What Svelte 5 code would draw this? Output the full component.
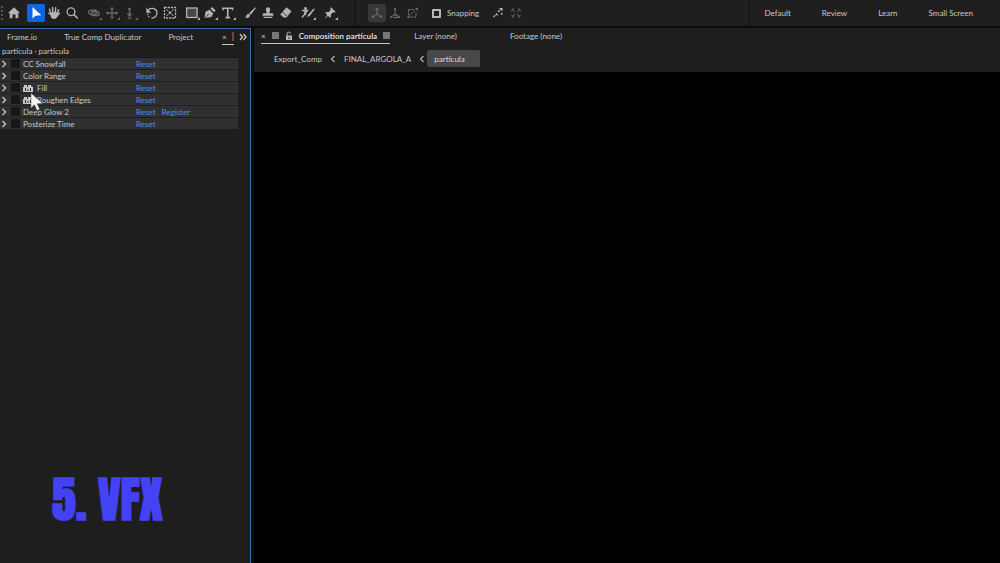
<script>
  const toolGroups = [
    ['home'],
    ['select', 'hand', 'zoom'],
    ['orbit', 'pan', 'dolly'],
    ['rotate', 'region'],
    ['rect', 'pen', 'type'],
    ['brush', 'stamp', 'eraser'],
    ['roto'],
    ['pin']
  ];
  const dim = ['orbit', 'pan', 'dolly'];
  const flyout = ['orbit', 'pan', 'dolly', 'rect', 'pen', 'type', 'roto', 'pin'];
  const effects = [
    { name: 'CC Snowfall' },
    { name: 'Color Range' },
    { name: 'Fill', badge: true },
    { name: 'Roughen Edges', badge: true },
    { name: 'Deep Glow 2', register: true },
    { name: 'Posterize Time' }
  ];
</script>

{#snippet toolIcon(name)}
  <svg viewBox="0 0 18 18" width="18" height="18" fill="none" stroke="currentColor" stroke-width="1.3" aria-hidden="true">
    {#if name === 'home'}
      <path d="M9 3.2 15 9h-1.700v5.200H10.500V10.500h-3v3.700H4.700V9H3z" fill="currentColor" stroke="none" />
    {:else if name === 'select'}
      <path d="M5.500 3v11.500l3-2.800 5.800-.5z" fill="currentColor" stroke="none" />
    {:else if name === 'hand'}
      <path d="M5.600 9 4.500 5.300M7.900 8.500 7.500 3.500M10.300 8.500l.4-4.800M12.300 9.200l1.300-3.500" stroke-width="1.500" stroke-linecap="round" />
      <path d="M5 8.200h7.900l-.2 1.300 1.500-1.100c.8-.4 1.300.2.9.8l-3 4.100-1.300 1.500H7.300c-1.200-1-1.400-2.200-1.800-3.600L3 9.500c-.3-.9.600-1.300 1.200-.700L5.300 10z" fill="currentColor" stroke="none" />
    {:else if name === 'zoom'}
      <circle cx="8" cy="7.700" r="3.900" /><path d="m10.900 10.600 3.900 3.900" stroke-width="1.500" />
    {:else if name === 'orbit'}
      <ellipse cx="9" cy="9" rx="5.500" ry="2.500" transform="rotate(12 9 9)" />
      <path d="M6 8.500a3.300 3.300 0 0 1 6.300-1.200c.6 2-.3 4.500-2.800 4.900C7.300 12.200 6 10.500 6 8.500z" fill="currentColor" stroke="none" />
      <path d="M7.500 9.200h3" stroke="#1f1f1f" />
    {:else if name === 'pan'}
      <path d="M9 4v10M4 9h10" /><path d="m9 2.800 2 2.400H7zM9 15.200l2-2.400H7zM2.800 9l2.400-2v4zM15.200 9l-2.400-2v4z" fill="currentColor" stroke="none" />
    {:else if name === 'dolly'}
      <path d="M8.500 4v8M6.500 14.200h4" /><path d="M5.500 9.500h6l-3 3.700zM7.200 3.800h2.600v2H7.200z" fill="currentColor" stroke="none" />
    {:else if name === 'rotate'}
      <path d="M5 6.400A5 5 0 0 1 13.900 8a5 5 0 0 1-5.400 6" /><path d="M4.500 9.500A5 5 0 0 0 7 13.500" stroke-dasharray="1.300 1.300" /><path d="M3.300 3.700v5h4.900z" fill="currentColor" stroke="none" />
    {:else if name === 'region'}
      <rect x="3.500" y="3.500" width="11" height="10.500" stroke-dasharray="2.200 1" />
      <path d="m5.500 5.500 2 2m5-2-2 2m-5 4.500 2-2m5 2-2-2" stroke-width="1" />
      <circle cx="9" cy="8.800" r="1.300" fill="currentColor" stroke="none" />
    {:else if name === 'rect'}
      <rect x="3.600" y="4" width="10.500" height="9.500" fill="#484848" />
    {:else if name === 'pen'}
      <path d="m3.500 14 1-6.200 4-2 3.800 3.600-2 3.500zM9.500 4.800l1.700-1.700 3.500 3.300-1.600 1.900z" fill="currentColor" stroke="none" />
      <path d="m4 13.700 3.800-3.800" stroke="#1f1f1f" stroke-width=".8" />
    {:else if name === 'type'}
      <path d="M4 6.200V4.300h9.500v1.900M8.750 4.500v9.200M6.500 13.600h4.500" stroke-width="1.600" />
    {:else if name === 'brush'}
      <path d="M14.300 3.200c.7.500.4 1.200 0 1.600l-4.500 6-1.800-1.600z" fill="currentColor" stroke="none" /><path d="M7.400 9.700 9.200 11.300c-.4 2.200-2.200 3-5.200 2.700 1.300-.8 1.100-3.700 3.400-4.300z" fill="currentColor" stroke="none" />
    {:else if name === 'stamp'}
      <path d="M7.700 8.500C6.700 6.500 6.300 3.300 9 3.300s2.300 3.200 1.300 5.200v.8h3c.8 0 1 .4 1 1.200v1.200H3.700v-1.200c0-.8.2-1.200 1-1.200h3zM4.500 12.700h9V14h-9z" fill="currentColor" stroke="none" />
    {:else if name === 'eraser'}
      <path d="m9.500 3.300 5 3.900-4.900 6.300H6.500L3.300 10.600z" fill="currentColor" stroke="none" /><path d="m5.500 8.200 4.700 4" stroke="#1f1f1f" stroke-width=".8" />
    {:else if name === 'roto'}
      <path d="M14.800 4.200 9.700 10l-2.200 3.500 3.700-2.300 4.600-6z" fill="currentColor" stroke="none" />
      <circle cx="6.500" cy="4.500" r="1.400" fill="currentColor" stroke="none" /><path d="M3 6.500h5.500L6.300 9.300 7 11M6 7l-.5 3.500-2.500 3" />
    {:else if name === 'pin'}
      <path d="m9.800 3 5 5-1.500.6-1.400 0-2 2 .1 2.200-1 1L4.300 9l1-1 2.300.1 2-2-.2-1.800zM6.500 10.500l1 1-4 3.300z" fill="currentColor" stroke="none" />
    {/if}
    {#if flyout.includes(name)}
      <path d="M17 13v3h-3z" fill="currentColor" stroke="none" />
    {/if}
  </svg>
{/snippet}

<div class="app">
  <header class="toolbar">
    <span class="grip"></span>
    <nav class="tools" aria-label="Tools">
      {#each toolGroups as group}
        <div class="group">
          {#each group as tool}
            <button class="tool" class:active={tool === 'select'} class:dim={dim.includes(tool)} aria-label={tool}>
              {@render toolIcon(tool)}
            </button>
          {/each}
        </div>
      {/each}
    </nav>
    <div class="options">
      <div class="group">
        <button class="tool axis boxed" aria-label="Local axis">
          <svg viewBox="0 0 18 18" width="18" height="18" fill="none" stroke="currentColor" aria-hidden="true"><path d="M9 5v5l-4 3M9 10l4 3" /><path d="M9 3.500 10.800 6H7.200zM3.800 13.800l.6-3 2.200 2.400zM14.200 13.800l-.6-3-2.200 2.400z" fill="currentColor" stroke="none" /></svg>
        </button>
        <button class="tool axis" aria-label="World axis">
          <svg viewBox="0 0 18 18" width="18" height="18" fill="none" stroke="currentColor" aria-hidden="true"><path d="M9 4.500V10l-4 3.300M9 10l4 3.300M7 11h4.500v2.500H7" /><path d="M9 3.500 10.500 6h-3zM4 14l.5-2.500 2 2zM14 14l-.5-2.500-2 2z" fill="currentColor" stroke="none" /></svg>
        </button>
        <button class="tool axis" aria-label="View axis">
          <svg viewBox="0 0 18 18" width="18" height="18" fill="none" stroke="currentColor" aria-hidden="true"><path d="M4.500 5.500h6M4.500 5.500v7M4.500 12.500l7-6.500M6.500 13h5.500V8" stroke-dasharray="2.500 .7" /><path d="M14 3.500v3.200l-3-2.500zM3.500 11l3 3h-3z" fill="currentColor" stroke="none" /></svg>
        </button>
      </div>
      <label class="snap"><input type="checkbox" />Snapping</label>
      <div class="group snaps">
        <button class="tool" aria-label="Snap to edges">
          <svg viewBox="0 0 18 18" width="18" height="18" fill="none" stroke="currentColor" aria-hidden="true"><path d="m4.500 13 3-3 1.500 2M9 8l3-3M12 9l1.500 1.500" stroke-width="1.200" stroke-dasharray="2.500 .7" /><path d="M13.500 4v3.500L10 4z" fill="currentColor" stroke="none" /></svg>
        </button>
        <button class="tool dim" aria-label="Snap inside">
          <svg viewBox="0 0 18 18" width="18" height="18" fill="none" stroke="currentColor" aria-hidden="true"><path d="M5 7V5h2M11 5h2v2M13 11v2h-2M7 13H5v-2M6 6l2 2M12 6l-2 2M6 12l2-2M12 12l-2-2" /></svg>
        </button>
      </div>
    </div>
    <nav class="workspaces" aria-label="Workspaces">
      <button>Default</button><button>Review</button><button>Learn</button><button>Small Screen</button>
    </nav>
  </header>

  <main>
    <section class="effects">
      <div class="tabs">
        <button>Frame.io</button>
        <button>True Comp Duplicator</button>
        <button>Project</button>
        <div class="tail">
          <button class="current" aria-label="Effect controls"><span>×</span><i></i></button>
          <button class="more" aria-label="More panels">
            <svg viewBox="0 0 8 8" width="8" height="8" fill="none" stroke="currentColor" stroke-width="1.300" aria-hidden="true"><path d="m1 1 2.500 3L1 7M4.500 1 7 4 4.500 7" /></svg>
          </button>
        </div>
      </div>
      <p class="source">partícula · partícula</p>
      <ul>
        {#each effects as fx}
          <li>
            <button class="twirl" aria-label={`Expand ${fx.name}`}>
              <svg viewBox="0 0 6 8" width="6" height="8" fill="none" stroke="currentColor" stroke-width="1.300" aria-hidden="true"><path d="m1.500 1 3 3-3 3" /></svg>
            </button>
            <input type="checkbox" aria-label={fx.name} />
            <span class="name">
              {#if fx.badge}
                <svg viewBox="0 0 10 8" width="10" height="8" aria-hidden="true"><path d="M0 3h1V1h3v2h1V1h3v1l2 1v5H0z" fill="#c8c8c8" /><path d="M2.500 4v3M5 5v2M7.500 4v3" stroke="#303030" /></svg>
              {/if}
              {fx.name}
            </span>
            <button class="action">Reset</button>
            {#if fx.register}<button class="action">Register</button>{/if}
          </li>
        {/each}
      </ul>
      <svg class="pointer" viewBox="0 0 14 20" width="14" height="20" aria-hidden="true"><path d="M1 1v15l3.500-3.200L7 18.500l2.700-1.200-2.500-5.500 5.300-.3z" fill="#f4f4f4" stroke="#555" stroke-width=".5" /></svg>
      <h1>5. VFX</h1>
    </section>

    <section class="viewer">
      <div class="tabs">
        <button class="current comp">
          <span>×</span><i></i>
          <svg viewBox="0 0 8 10" width="8" height="10" fill="none" aria-hidden="true"><path d="M2 5V2.800a1.700 1.700 0 0 1 3.400 0" stroke="#b5b5b5" /><path d="M1 4.500h6V9H1z" fill="#b5b5b5" /><path d="M4 6v2" stroke="#222" /></svg>
          <span class="title">Composition partícula</span>
          <i></i>
        </button>
        <button class="layer">Layer (none)</button>
        <button>Footage (none)</button>
      </div>
      <nav class="crumbs" aria-label="Composition path">
        <button>Export_Comp</button>
        <svg viewBox="0 0 6 8" width="6" height="8" fill="none" stroke="#b5b5b5" stroke-width="1.200" aria-hidden="true"><path d="m4.500 1-3 3 3 3" /></svg>
        <button>FINAL_ARGOLA_A</button>
        <svg viewBox="0 0 6 8" width="6" height="8" fill="none" stroke="#b5b5b5" stroke-width="1.200" aria-hidden="true"><path d="m4.500 1-3 3 3 3" /></svg>
        <button class="here">partícula</button>
      </nav>
      <div class="canvas"></div>
    </section>
  </main>
</div>

<style>
  :global(body) { margin: 0; background: #0b0b0b; }
  .app {
    display: flex;
    flex-direction: column;
    min-height: 100vh;
    font: 8px/12px Lato, 'Noto Sans', sans-serif;
    color: #c8c8c8;
    background: #0b0b0b;
  }
  button {
    padding: 0;
    border: 0;
    background: none;
    color: inherit;
    font: inherit;
    white-space: nowrap;
  }
  svg { display: block; flex: none; }
  .toolbar {
    display: flex;
    height: 26px;
    background: #1f1f1f;
    margin-bottom: 2px;
  }
  .grip {
    width: 2px;
    margin: 6px 2px 6px 1px;
    background: repeating-linear-gradient(#555 0 2px, transparent 2px 4px);
  }
  .tools { display: flex; align-items: center; gap: 4px; width: 350px; }
  .group { display: flex; }
  .tool { width: 18px; height: 18px; border-radius: 2px; color: #b4b4b4; }
  .tool.active { background: #0d66e0; color: #fff; }
  .tool.dim { color: #696969; }
  .tool.axis { color: #707070; }
  .tool.boxed { background: #383838; }
  .options {
    flex: 1;
    display: flex;
    align-items: center;
    padding-left: 12px;
    border-left: 1px solid #101010;
  }
  .snap { display: flex; align-items: center; gap: 6px; margin: 0 10px; }
  .snap input {
    appearance: none;
    box-sizing: border-box;
    width: 9px;
    height: 9px;
    margin: 0;
    border: 2px solid #b8b8b8;
    border-radius: 1px;
  }
  .workspaces {
    display: flex;
    align-items: center;
    gap: 31px;
    padding: 0 27px 0 15px;
    border-left: 1px solid #101010;
  }
  main { flex: 1; display: flex; gap: 3px; }
  .effects {
    position: relative;
    box-sizing: border-box;
    width: 251px;
    flex: none;
    display: flex;
    flex-direction: column;
    background: #1e1e1e;
    border: solid #3a6cb4;
    border-width: 1px 1px 0 0;
  }
  .tabs { display: flex; height: 16px; }
  .effects .tabs { padding: 0 3px 0 7px; gap: 27px; }
  .tail { display: flex; gap: 5px; margin-left: auto; }
  .tail .current { width: 12px; }
  .current {
    display: flex;
    align-items: center;
    justify-content: space-between;
    border-bottom: 1px solid #c4c4c4;
  }
  .effects .current i { width: 2px; height: 9px; background: #68483f; }
  .more { display: flex; align-items: center; }
  .source { margin: 0; padding-left: 2px; }
  ul {
    list-style: none;
    margin: 0 12px 0 0;
    padding: 0;
    border-top: 1px solid #161616;
  }
  li {
    display: flex;
    align-items: center;
    box-sizing: border-box;
    height: 12px;
    background: #303030;
    border-bottom: 1px solid #202020;
  }
  .twirl { width: 11px; padding-left: 1px; }
  li input {
    appearance: none;
    width: 9px;
    height: 9px;
    margin: 0 3px 0 0;
    background: #171717;
  }
  .name { display: flex; align-items: center; gap: 4px; width: 113px; }
  .action { color: #4a90f0; margin-right: 6px; }
  .pointer { position: absolute; left: 30px; top: 63px; }
  h1 {
    margin: auto 0 29px 52px;
    font: 700 48px/68px Impact, Anton, 'Liberation Sans Narrow', 'Liberation Sans', sans-serif;
    color: #4343f5;
    white-space: nowrap;
  }
  .viewer { flex: 1; display: flex; flex-direction: column; background: #1e1e1e; }
  .viewer .tabs { padding-left: 7px; }
  .comp { gap: 6px; color: #dcdcdc; margin-right: 24px; }
  .comp i { width: 7px; height: 7px; background: #777; }
  .comp .title { font-weight: 700; }
  .layer { margin-right: 53px; }
  .crumbs { display: flex; align-items: center; gap: 8px; height: 17px; padding: 6px 20px 5px; }
  .crumbs .here {
    width: 53px;
    height: 17px;
    margin-left: -6px;
    padding-left: 7px;
    border-radius: 2px;
    background: #484848;
    color: #dcdcdc;
    text-align: left;
  }
  .canvas { flex: 1; background: #000; }
</style>
